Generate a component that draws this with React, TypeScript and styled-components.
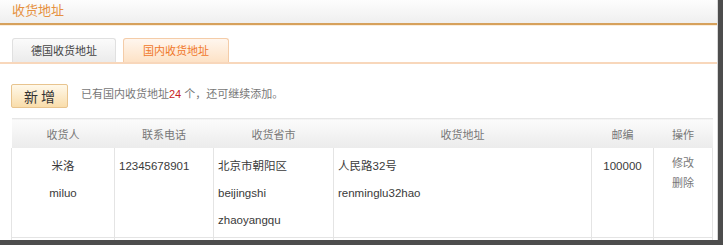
import styled, { createGlobalStyle } from 'styled-components';

const GlobalStyle = createGlobalStyle`
  html, body {
    margin: 0;
    padding: 0;
    background: #ffffff;
  }
  body {
    font-family: 'Liberation Sans', 'Noto Sans CJK SC', sans-serif;
    font-size: 11px;
    color: #333;
  }
`;

type Address = {
  name: string[];
  phone: string;
  region: string[];
  street: string[];
  zip: string;
};

const addresses: Address[] = [
  {
    name: ['米洛', 'miluo'],
    phone: '12345678901',
    region: ['北京市朝阳区', 'beijingshi', 'zhaoyangqu'],
    street: ['人民路32号', 'renminglu32hao'],
    zip: '100000',
  },
];

const columns = [
  { title: '收货人', width: 103 },
  { title: '联系电话', width: 99 },
  { title: '收货省市', width: 120 },
  { title: '收货地址', width: 258 },
  { title: '邮编', width: 62 },
  { title: '操作', width: 59 },
];

export default function App() {
  return (
    <>
      <GlobalStyle />
      <Frame>
        <Page>
          <TitleBar>收货地址</TitleBar>
          <Tabs>
            <Tab>德国收货地址</Tab>
            <Tab active>国内收货地址</Tab>
          </Tabs>
          <ActionRow>
            <AddButton>新 增</AddButton>
            <Hint>
              已有国内收货地址<Count>24</Count> 个，还可继续添加。
            </Hint>
          </ActionRow>
          <Table>
            <colgroup>
              {columns.map((c) => (
                <col key={c.title} style={{ width: c.width }} />
              ))}
            </colgroup>
            <thead>
              <tr>
                {columns.map((c) => (
                  <Th key={c.title}>{c.title}</Th>
                ))}
              </tr>
            </thead>
            <tbody>
              {addresses.map((a) => (
                <tr key={a.phone}>
                  <Td align="center">
                    {a.name.map((l) => (
                      <Line key={l}>{l}</Line>
                    ))}
                  </Td>
                  <Td>
                    <Line>{a.phone}</Line>
                  </Td>
                  <Td>
                    {a.region.map((l) => (
                      <Line key={l}>{l}</Line>
                    ))}
                  </Td>
                  <Td>
                    {a.street.map((l) => (
                      <Line key={l}>{l}</Line>
                    ))}
                  </Td>
                  <Td align="center">
                    <Line>{a.zip}</Line>
                  </Td>
                  <Td align="center">
                    <OpLink>修改</OpLink>
                    <OpLink>删除</OpLink>
                  </Td>
                </tr>
              ))}
              <tr>
                {columns.map((c) => (
                  <Td key={c.title}>
                    <Line>&nbsp;</Line>
                  </Td>
                ))}
              </tr>
            </tbody>
          </Table>
        </Page>
      </Frame>
    </>
  );
}

const Frame = styled.div`
  width: 723px;
  height: 245px;
  box-sizing: border-box;
  border-right: 5px solid #4d4d4d;
  border-bottom: 5px solid #4d4d4d;
  overflow: hidden;
`;

const Page = styled.div`
  width: 718px;
  height: 240px;
  overflow: hidden;
  border-right: 1px solid #d8d8d8;
  box-sizing: border-box;
`;

const TitleBar = styled.div`
  height: 23px;
  line-height: 22px;
  padding-left: 12px;
  font-size: 13px;
  color: #e69140;
  background: linear-gradient(#fdfdfd, #efefef);
  border-bottom: 2px solid #d6a15c;
  box-shadow: 0 1px 0 #fbeedd;
`;

const Tabs = styled.div`
  display: flex;
  gap: 7px;
  margin-top: 13px;
  padding-left: 12px;
  border-bottom: 2px solid #f8d7bb;
`;

const Tab = styled.div<{ active?: boolean }>`
  width: ${(p) => (p.active ? 106 : 104)}px;
  height: 24px;
  line-height: 25px;
  text-align: center;
  font-size: 11px;
  box-sizing: border-box;
  border: 1px solid ${(p) => (p.active ? '#f4cca8' : '#e0e0e0')};
  border-bottom: none;
  border-radius: 3px 3px 0 0;
  color: ${(p) => (p.active ? '#f0782a' : '#444')};
  background: ${(p) =>
    p.active ? 'linear-gradient(#fff6ee, #fde2c6)' : 'linear-gradient(#fbfbfb, #ebebeb)'};
`;

const ActionRow = styled.div`
  display: flex;
  align-items: center;
  gap: 13px;
  margin-top: 20px;
  padding-left: 11px;
`;

const AddButton = styled.button`
  width: 57px;
  height: 24px;
  padding: 0;
  font-family: 'Noto Sans CJK SC', sans-serif;
  font-size: 14px;
  color: #333;
  background: linear-gradient(#fff8e9, #f9ddab);
  border: 1px solid #e8c48e;
  border-radius: 2px;
`;

const Hint = styled.span`
  color: #777;
  font-size: 11px;
  margin-top: -6px;
`;

const Count = styled.span`
  color: #c8241f;
`;

const Table = styled.table`
  margin: 10px 0 0 11px;
  width: 701px;
  table-layout: fixed;
  border-collapse: collapse;
`;

const Th = styled.th`
  height: 29px;
  padding: 0;
  font-weight: normal;
  font-size: 11px;
  color: #777;
  text-align: center;
  background: linear-gradient(#fbfbfb, #ebebeb);
  border-top: 1px solid #e6e6e6;
`;

const Td = styled.td<{ align?: 'center' | 'left' }>`
  vertical-align: top;
  padding: 5px 4px 3px 4px;
  text-align: ${(p) => p.align ?? 'left'};
  border: 1px solid #e4e4e4;
  border-top: none;
  color: #3a3a3a;
  font-size: 11.5px;
`;

const Line = styled.div`
  line-height: 27px;
  height: 27px;
`;

const OpLink = styled.div`
  line-height: 20px;
  font-size: 11px;
  color: #777;
  cursor: pointer;
`;
